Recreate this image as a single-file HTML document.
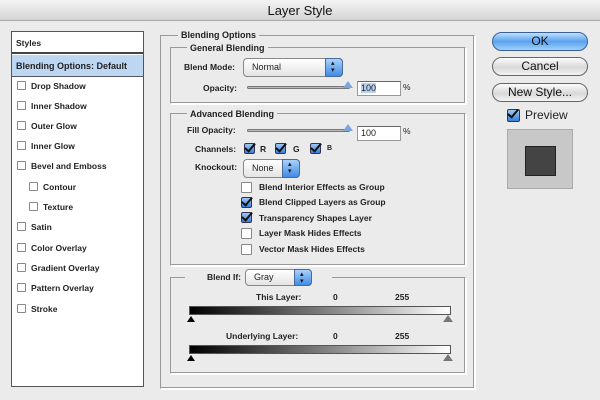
<!DOCTYPE html>
<html><head><meta charset="utf-8"><style>
*{margin:0;padding:0;box-sizing:border-box}
body{width:600px;height:400px;overflow:hidden;background:#ebebeb;font-family:"Liberation Sans",sans-serif;font-size:8.5px;font-weight:bold;color:#222;position:relative}
.a{position:absolute;white-space:nowrap}
.title{left:0;top:0;width:600px;height:21px;background:linear-gradient(#f4f4f4,#d4d4d4);border-bottom:1px solid #aaa;text-align:center;font-size:13px;font-weight:normal;line-height:21px;color:#111}
.list{left:11px;top:31px;width:133px;height:356px;background:#fff;border:1px solid #555}
.grp{border:1px solid #999;border-right-color:#fff;border-bottom-color:#fff;box-shadow:inset -1px -1px 0 #999,1px 1px 0 #fff}
.lbl{background:#ebebeb;padding:0 3px}
.cb{width:9px;height:9px;border:1px solid #888;background:#fff;border-radius:1px}
.chk{width:11px;height:11px;border:1px solid #335;background:linear-gradient(#9cc8f4,#3a7ed8);border-radius:2px}
.chk:after{content:"";position:absolute;left:2px;top:-3px;width:4px;height:9px;border:solid #111;border-width:0 2px 2px 0;transform:rotate(40deg)}
.pop{height:19px;border:1px solid #888;border-radius:4px;background:linear-gradient(#fff,#e4e4e4);padding-left:8px;line-height:17px;font-weight:normal;font-size:9px}
.pop i{position:absolute;right:-1px;top:-1px;width:18px;height:19px;border-radius:0 4px 4px 0;background:linear-gradient(#a9d2fb,#3f8ce6);border:1px solid #4a6a9a}
.pop i:after{content:"▴\A▾";white-space:pre;position:absolute;left:5px;top:1px;font-size:7px;line-height:7px;color:#111;font-style:normal}
.inp{height:15px;width:44px;background:#fff;border:1px solid #999;border-top-color:#666;font-weight:normal;font-size:9px;padding-left:3px;line-height:13px}
.sl{height:3px;border:1px solid #777;background:#bbb;border-radius:2px}
.th{width:0;height:0;border-left:5px solid transparent;border-right:5px solid transparent;border-bottom:7px solid #7aa6e0}
.btn{left:492px;width:96px;height:19px;border:1px solid #666;border-radius:10px;background:linear-gradient(#fdfdfd,#d8d8d8 55%,#f4f4f4);text-align:center;font-size:12px;font-weight:normal;line-height:17px;color:#111}
.grad{left:189px;width:262px;height:9px;border:1px solid #555;background:linear-gradient(90deg,#000,#888 55%,#fff)}
.tb{width:0;height:0;border-left:4px solid transparent;border-right:4px solid transparent;border-bottom:6px solid #000}
.tw{width:0;height:0;border-left:5px solid transparent;border-right:5px solid transparent;border-bottom:7px solid #777}
</style></head><body>
<div class="a title">Layer Style</div>

<div class="a list">
 <div class="a" style="left:0;top:0;width:131px;height:22px;border-bottom:2px solid #444;padding:6px 0 0 4px">Styles</div>
 <div class="a" style="left:0;top:23px;width:131px;height:22px;background:#bdd7f3;border-bottom:1px solid #556;padding:6px 0 0 4px;font-size:9px">Blending Options: Default</div>
</div>
<div class="a cb" style="left:17px;top:81px"></div><div class="a" style="left:31px;top:81px">Drop Shadow</div>
<div class="a cb" style="left:17px;top:101px"></div><div class="a" style="left:31px;top:101px">Inner Shadow</div>
<div class="a cb" style="left:17px;top:121px"></div><div class="a" style="left:31px;top:121px">Outer Glow</div>
<div class="a cb" style="left:17px;top:141px"></div><div class="a" style="left:31px;top:141px">Inner Glow</div>
<div class="a cb" style="left:17px;top:161px"></div><div class="a" style="left:31px;top:161px">Bevel and Emboss</div>
<div class="a cb" style="left:29px;top:182px"></div><div class="a" style="left:43px;top:182px">Contour</div>
<div class="a cb" style="left:29px;top:202px"></div><div class="a" style="left:43px;top:202px">Texture</div>
<div class="a cb" style="left:17px;top:222px"></div><div class="a" style="left:31px;top:222px">Satin</div>
<div class="a cb" style="left:17px;top:243px"></div><div class="a" style="left:31px;top:243px">Color Overlay</div>
<div class="a cb" style="left:17px;top:263px"></div><div class="a" style="left:31px;top:263px">Gradient Overlay</div>
<div class="a cb" style="left:17px;top:283px"></div><div class="a" style="left:31px;top:283px">Pattern Overlay</div>
<div class="a cb" style="left:17px;top:304px"></div><div class="a" style="left:31px;top:304px">Stroke</div>

<div class="a grp" style="left:160px;top:35px;width:315px;height:354px"></div>
<div class="a lbl" style="left:178px;top:30px;font-size:9px">Blending Options</div>

<div class="a grp" style="left:170px;top:47px;width:296px;height:57px"></div>
<div class="a lbl" style="left:187px;top:43px;font-size:9px">General Blending</div>
<div class="a" style="left:184px;top:62px">Blend Mode:</div>
<div class="a pop" style="left:243px;top:58px;width:100px">Normal<i></i></div>
<div class="a" style="left:203px;top:83px">Opacity:</div>
<div class="a sl" style="left:247px;top:86px;width:103px"></div>
<div class="a th" style="left:343px;top:81px"></div>
<div class="a inp" style="left:357px;top:81px;background:#fff"><span style="background:#b9d2f0">100</span></div>
<div class="a" style="left:403px;top:82px;font-weight:normal">%</div>

<div class="a grp" style="left:170px;top:113px;width:296px;height:153px"></div>
<div class="a lbl" style="left:187px;top:109px;font-size:9px">Advanced Blending</div>
<div class="a" style="left:187px;top:125px">Fill Opacity:</div>
<div class="a sl" style="left:247px;top:129px;width:103px"></div>
<div class="a th" style="left:343px;top:124px"></div>
<div class="a inp" style="left:357px;top:126px">100</div>
<div class="a" style="left:403px;top:126px;font-weight:normal">%</div>
<div class="a" style="left:195px;top:144px">Channels:</div>
<div class="a chk" style="left:244px;top:143px"></div><div class="a" style="left:260px;top:144px">R</div>
<div class="a chk" style="left:275px;top:143px"></div><div class="a" style="left:293px;top:144px">G</div>
<div class="a chk" style="left:310px;top:143px"></div><div class="a" style="left:327px;top:145px;font-size:7px">B</div>
<div class="a" style="left:195px;top:162px">Knockout:</div>
<div class="a pop" style="left:243px;top:159px;width:57px">None<i></i></div>
<div class="a cb" style="left:241px;top:182px;width:11px;height:11px"></div><div class="a" style="left:259px;top:182px">Blend Interior Effects as Group</div>
<div class="a chk" style="left:241px;top:197px"></div><div class="a" style="left:259px;top:197px">Blend Clipped Layers as Group</div>
<div class="a chk" style="left:241px;top:212px"></div><div class="a" style="left:259px;top:213px">Transparency Shapes Layer</div>
<div class="a cb" style="left:241px;top:228px;width:11px;height:11px"></div><div class="a" style="left:259px;top:228px">Layer Mask Hides Effects</div>
<div class="a cb" style="left:241px;top:244px;width:11px;height:11px"></div><div class="a" style="left:259px;top:244px">Vector Mask Hides Effects</div>

<div class="a grp" style="left:170px;top:277px;width:296px;height:97px"></div>
<div class="a lbl" style="left:185px;top:269px;width:60px;height:14px"></div>
<div class="a" style="left:207px;top:272px">Blend If:</div>
<div class="a lbl" style="left:312px;top:270px;width:20px;height:12px"></div>
<div class="a pop" style="left:245px;top:269px;width:67px;height:17px;line-height:15px">Gray<i style="height:17px"></i></div>
<div class="a" style="left:256px;top:292px">This Layer:</div>
<div class="a" style="left:333px;top:292px">0</div>
<div class="a" style="left:395px;top:292px">255</div>
<div class="a grad" style="top:306px"></div>
<div class="a tb" style="left:187px;top:316px"></div>
<div class="a tw" style="left:443px;top:315px"></div>
<div class="a" style="left:226px;top:331px">Underlying Layer:</div>
<div class="a" style="left:333px;top:331px">0</div>
<div class="a" style="left:395px;top:331px">255</div>
<div class="a grad" style="top:345px"></div>
<div class="a tb" style="left:187px;top:355px"></div>
<div class="a tw" style="left:443px;top:354px"></div>

<div class="a btn" style="top:32px;background:linear-gradient(#bfe0fd,#5aa2ee 50%,#9fd0fb);border-color:#3a5f99">OK</div>
<div class="a btn" style="top:57px">Cancel</div>
<div class="a btn" style="top:83px">New Style...</div>
<div class="a chk" style="left:507px;top:109px;width:13px;height:13px"></div>
<div class="a" style="left:525px;top:108px;font-size:12px;font-weight:normal">Preview</div>
<div class="a" style="left:507px;top:129px;width:66px;height:60px;background:#c8c8c8;border:1px solid #aaa"></div>
<div class="a" style="left:525px;top:146px;width:31px;height:30px;background:#444;border:1px solid #222"></div>
</body></html>
